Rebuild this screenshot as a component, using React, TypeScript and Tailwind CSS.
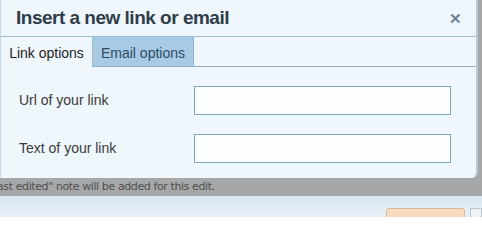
import { useState } from 'react'

const App = () => {
  const [tab, setTab] = useState('link')

  return (
    <div className="relative w-[482px] h-[217px] overflow-hidden bg-[#a6a7a8] font-['Liberation_Sans',Arial,sans-serif]">
      {/* page behind the overlay */}
      <div className="pt-[178px]">
        <div className="h-[18px] flex items-center text-[11px] text-[#505050] ml-[-3px] font-['DejaVu_Sans',Verdana,sans-serif] tracking-[-0.4px] whitespace-nowrap">
          ast edited" note will be added for this edit.
        </div>
        <div className="h-[21px] bg-gradient-to-b from-[#d9e7f2] to-[#e9f1f8] flex justify-end items-start pt-[12px] gap-[5px]">
          <div className="w-[79px] h-[12px] bg-[#f8dcc0] border border-[#d9b89a] rounded-t-[3px]"></div>
          <div className="w-[12px] h-[12px] bg-[#eef3f7] border border-[#b9c4cc]"></div>
        </div>
      </div>

      {/* dialog */}
      <div className="absolute left-0 top-0 w-[478px] h-[178px] bg-[#eff6fc] border-l border-r-2 border-[#c4d7e4] border-r-[#b7c9d5] rounded-br-[6px] text-[#2d3b47]">
        <div className="h-[37px] flex items-center justify-between pl-[15px] pr-[14px] border-b border-[#9dbccc]">
          <h1 className="text-[19px] font-bold tracking-[-0.5px] text-[#2e3d49]">Insert a new link or email</h1>
          <button className="text-[#6f8593] text-[15px] font-bold leading-none">✕</button>
        </div>

        <div className="flex h-[30px]">
          <button
            onClick={() => setTab('link')}
            className={`w-[92px] pt-[3px] text-[14px] border-r border-[#9dbccc] ${tab === 'link' ? 'bg-[#eff6fc] text-[#222]' : 'bg-[#a8cae4] text-[#2e4b63] border-b'}`}
          >
            Link options
          </button>
          <button
            onClick={() => setTab('email')}
            className={`w-[101px] pt-[3px] text-[14px] border-r border-[#8fb3cd] ${tab === 'email' ? 'bg-[#eff6fc] text-[#222]' : 'bg-[#a8cae4] text-[#2e4b63] border-b'}`}
          >
            Email options
          </button>
          <div className="flex-1 border-b border-[#8fb0c2]"></div>
        </div>

        <div className="pt-[19px] flex flex-col gap-[19px]">
          <div className="flex items-center">
            <label className="w-[193px] pl-[18px] text-[14px] text-[#3a3a3a]">Url of your link</label>
            <input className="w-[257px] h-[29px] bg-[#fbfdff] border border-[#79aab5] outline-none" />
          </div>
          <div className="flex items-center">
            <label className="w-[193px] pl-[18px] text-[14px] text-[#3a3a3a]">Text of your link</label>
            <input className="w-[257px] h-[29px] bg-[#fbfdff] border border-[#79aab5] outline-none" />
          </div>
        </div>
      </div>
    </div>
  )
}

export default App
